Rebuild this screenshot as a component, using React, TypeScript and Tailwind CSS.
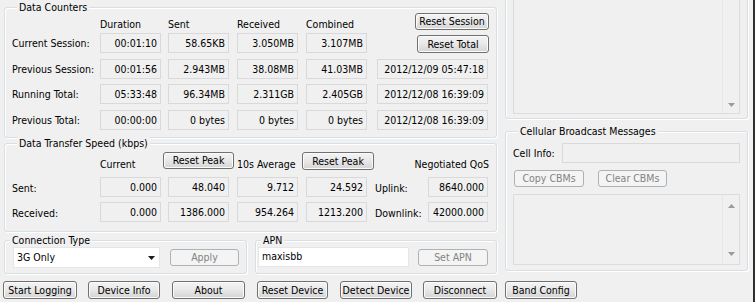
import type { ReactNode } from 'react'

function Group({
  title,
  className = '',
  children,
}: {
  title?: string
  className?: string
  children?: ReactNode
}) {
  return (
    <div
      className={`flex flex-col border border-[#d5dfe5] rounded-[3px] shadow-[inset_1px_1px_0_#ffffff,1px_1px_0_#ffffff] ${className}`}>
      {title && (
        <span className="-mt-[8px] ml-[5px] self-start bg-[#f0f0f0] px-[2px] leading-[14px]">{title}</span>
      )}
      {children}
    </div>
  )
}

function Btn({
  children,
  className = '',
  disabled = false,
}: {
  children: ReactNode
  className?: string
  disabled?: boolean
}) {
  const look = disabled
    ? 'border-[#adb2b5] bg-[#f4f4f4] text-[#838383]'
    : 'border-[#707070] bg-linear-to-b from-[#f4f4f4] via-[#e8e8e8] to-[#d4d4d4] text-black shadow-[inset_0_0_0_1px_#fbfbfb]'
  return (
    <button
      type="button"
      disabled={disabled}
      className={`flex shrink-0 items-center justify-center rounded-[3px] border leading-none whitespace-nowrap ${look} ${className}`}>
      {children}
    </button>
  )
}

function Field({ value, className = '' }: { value: string; className?: string }) {
  return (
    <div
      className={`flex h-[20px] items-center justify-end border border-[#d9d9d9] bg-[#f0f0f0] px-[3px] pt-[1px] whitespace-nowrap ${className}`}>
      {value}
    </div>
  )
}

function Arrow({ up = false, color = '#9a9a9a' }: { up?: boolean; color?: string }) {
  return (
    <svg width="7" height="4" viewBox="0 0 7 4">
      <path d={up ? 'M0 4 L3.5 0 L7 4 Z' : 'M0 0 L7 0 L3.5 4 Z'} fill={color} />
    </svg>
  )
}

const counters = [
  { label: 'Current Session:', d: '00:01:10', s: '58.65KB', r: '3.050MB', c: '3.107MB', t: null },
  { label: 'Previous Session:', d: '00:01:56', s: '2.943MB', r: '38.08MB', c: '41.03MB', t: '2012/12/09 05:47:18' },
  { label: 'Running Total:', d: '05:33:48', s: '96.34MB', r: '2.311GB', c: '2.405GB', t: '2012/12/08 16:39:09' },
  { label: 'Previous Total:', d: '00:00:00', s: '0 bytes', r: '0 bytes', c: '0 bytes', t: '2012/12/08 16:39:09' },
]

const rowGaps = ['mt-[3px]', 'mt-[6px]', 'mt-[5px]', 'mt-[6px]']

const speeds = [
  { label: 'Sent:', v: ['0.000', '48.040', '9.712', '24.592'], q: 'Uplink:', qv: '8640.000', gap: 'mt-[7px]' },
  { label: 'Received:', v: ['0.000', '1386.000', '954.264', '1213.200'], q: 'Downlink:', qv: '42000.000', gap: 'mt-[5px]' },
]

export default function App() {
  return (
    <div className="flex h-[302px] w-[755px] flex-col overflow-hidden border-r-2 border-[#2e2e2e] bg-[#f0f0f0] font-['DejaVu_Sans_Condensed','Liberation_Sans',sans-serif] text-[10.5px] text-black">
      <div className="flex h-[274px] shrink-0">
        {/* left column */}
        <div className="ml-[4px] flex w-[493px] flex-col">
          <Group title="Data Counters" className="mt-[7px] h-[131px] px-[7px]">
            <div className="-mt-[1px] grid h-[17px] grid-cols-[88px_68px_69px_69px_71px_1fr] items-end">
              <span />
              <span className="leading-[11px]">Duration</span>
              <span className="leading-[11px]">Sent</span>
              <span className="leading-[11px]">Received</span>
              <span className="leading-[11px]">Combined</span>
              <div className="flex h-full justify-end">
                <Btn className="h-[17px] w-[74px]">Reset Session</Btn>
              </div>
            </div>
            {counters.map((row, i) => (
              <div
                key={row.label}
                className={`grid h-[20px] grid-cols-[88px_68px_69px_69px_71px_1fr] items-center ${rowGaps[i]}`}>
                <span className="pt-[2px] whitespace-nowrap">{row.label}</span>
                <Field value={row.d} className="w-[61px]" />
                <Field value={row.s} className="w-[61px]" />
                <Field value={row.r} className="w-[61px]" />
                <Field value={row.c} className="w-[61px]" />
                {row.t ? (
                  <Field value={row.t} className="w-[111px]" />
                ) : (
                  <div className="flex h-full items-end justify-end">
                    <Btn className="h-[18px] w-[72px]">Reset Total</Btn>
                  </div>
                )}
              </div>
            ))}
          </Group>

          <Group title="Data Transfer Speed (kbps)" className="mt-[5px] h-[89px] px-[7px]">
            <div className="mt-[2px] flex h-[18px] items-end">
              <span className="w-[88px] shrink-0" />
              <span className="w-[63px] shrink-0 leading-[11px]">Current</span>
              <Btn className="mb-[1px] h-[17px] w-[71px]">Reset Peak</Btn>
              <span className="ml-[3px] w-[65px] shrink-0 leading-[11px] whitespace-nowrap">10s Average</span>
              <Btn className="h-[18px] w-[72px]">Reset Peak</Btn>
              <span className="flex-1 text-right leading-[11px] whitespace-nowrap">Negotiated QoS</span>
            </div>
            {speeds.map((row) => (
              <div
                key={row.label}
                className={`grid h-[20px] grid-cols-[88px_68px_69px_69px_69px_53px_1fr] items-center ${row.gap}`}>
                <span className="pt-[4px]">{row.label}</span>
                {row.v.map((v, j) => (
                  <Field key={j} value={v} className="w-[61px]" />
                ))}
                <span className="pt-[4px]">{row.q}</span>
                <Field value={row.qv} className="w-[60px]" />
              </div>
            ))}
          </Group>

          <div className="mt-[8px] flex h-[34px]">
            <Group title="Connection Type" className="w-[243px]">
              <div className="flex items-center">
                <div className="ml-[8px] flex h-[21px] w-[147px] items-center justify-between border border-[#e6e6e6] bg-white pr-[4px] pl-[3px]">
                  <span>3G Only</span>
                  <Arrow color="#1a1a1a" />
                </div>
                <Btn disabled className="ml-[10px] h-[17px] w-[69px]">
                  Apply
                </Btn>
              </div>
            </Group>
            <Group title="APN" className="ml-[8px] w-[242px]">
              <div className="flex items-center">
                <div className="ml-[2px] flex h-[20px] w-[151px] items-center border border-[#e6e6e6] bg-white px-[3px]">
                  maxisbb
                </div>
                <Btn disabled className="ml-[9px] h-[17px] w-[70px]">
                  Set APN
                </Btn>
              </div>
            </Group>
          </div>
        </div>

        {/* right column */}
        <div className="ml-[8px] flex w-[243px] flex-col">
          <Group className="-mt-[20px] h-[139px] px-[7px] pt-[7px] pb-[4px]">
            <div className="flex flex-1 border border-[#dcdcdc] bg-[#f0f0f0]">
              <div className="flex-1" />
              <div className="flex w-[17px] flex-col items-center justify-end border-l border-[#e8e8e8] pb-[6px]">
                <Arrow />
              </div>
            </div>
          </Group>

          <Group title="Cellular Broadcast Messages" className="mt-[12px] h-[140px] px-[7px]">
            <div className="mt-[5px] flex h-[20px] items-center">
              <span className="w-[49px] shrink-0 pt-[2px]">Cell Info:</span>
              <div className="h-[20px] flex-1 border border-[#d9d9d9] bg-[#f0f0f0]" />
            </div>
            <div className="mt-[7px] flex h-[17px]">
              <Btn disabled className="ml-[1px] h-[17px] w-[70px]">
                Copy CBMs
              </Btn>
              <Btn disabled className="ml-[14px] h-[17px] w-[69px]">
                Clear CBMs
              </Btn>
            </div>
            <div className="mt-[7px] flex h-[71px] border border-[#dcdcdc] bg-[#f0f0f0]">
              <div className="flex-1" />
              <div className="flex w-[17px] flex-col items-center justify-between border-l border-[#e8e8e8] pt-[9px] pb-[8px]">
                <Arrow up />
                <Arrow />
              </div>
            </div>
          </Group>
        </div>
      </div>

      {/* bottom buttons */}
      <div className="mt-[7px] ml-[3px] flex h-[18px]">
        <Btn className="h-[18px] w-[74px]">Start Logging</Btn>
        <Btn className="ml-[11px] h-[18px] w-[72px]">Device Info</Btn>
        <Btn className="ml-[12px] h-[18px] w-[73px]">About</Btn>
        <Btn className="ml-[12px] h-[18px] w-[71px]">Reset Device</Btn>
        <Btn className="ml-[12px] h-[18px] w-[72px]">Detect Device</Btn>
        <Btn className="ml-[11px] h-[18px] w-[74px]">Disconnect</Btn>
        <Btn className="ml-[8px] h-[18px] w-[72px]">Band Config</Btn>
      </div>
    </div>
  )
}
